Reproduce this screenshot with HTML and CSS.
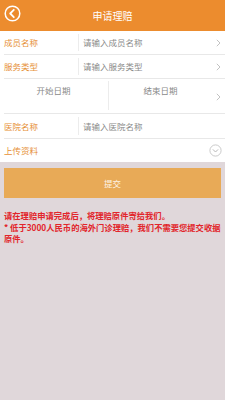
FILE: index.html
```html
<!DOCTYPE html>
<html lang="zh-CN">
<head>
    <meta charset="UTF-8">
    <meta name="viewport" content="width=device-width, initial-scale=1.0">
    <title>申请理赔</title>
    <link rel="stylesheet" href="styles.css">
</head>
<body>
    <header class="topbar">
        <svg class="back" width="17" height="17" viewBox="0 0 17 17">
            <circle cx="8.5" cy="8.5" r="7.3" fill="none" stroke="#fff" stroke-width="1.5"/>
            <path d="M9.8 4.8 L6.2 8.5 L9.8 12.2" fill="none" stroke="#fff" stroke-width="1.8" stroke-linecap="round" stroke-linejoin="round"/>
        </svg>
        <h1>申请理赔</h1>
    </header>

    <div class="form">
        <div class="row">
            <span class="label">成员名称</span>
            <span class="value">请输入成员名称</span>
            <svg class="chevron" width="5" height="8" viewBox="0 0 5 8"><path d="M0.8 0.8 L4 4 L0.8 7.2" fill="none" stroke="#bbb" stroke-width="0.9"/></svg>
        </div>
        <div class="row">
            <span class="label">服务类型</span>
            <span class="value">请输入服务类型</span>
            <svg class="chevron" width="5" height="8" viewBox="0 0 5 8"><path d="M0.8 0.8 L4 4 L0.8 7.2" fill="none" stroke="#bbb" stroke-width="0.9"/></svg>
        </div>
        <div class="row date-row">
            <div class="date-cell start">开始日期</div>
            <div class="date-cell end">结束日期</div>
            <svg class="chevron" width="5" height="8" viewBox="0 0 5 8"><path d="M0.8 0.8 L4 4 L0.8 7.2" fill="none" stroke="#bbb" stroke-width="0.9"/></svg>
        </div>
        <div class="row tall">
            <span class="label">医院名称</span>
            <span class="value">请输入医院名称</span>
        </div>
        <div class="row last">
            <span class="label">上传资料</span>
            <svg class="toggle" width="13" height="13" viewBox="0 0 13 13">
                <circle cx="6.5" cy="6.5" r="5.6" fill="none" stroke="#c4c4c4" stroke-width="0.9"/>
                <path d="M3.9 5.4 L6.5 8 L9.1 5.4" fill="none" stroke="#b8b8b8" stroke-width="1"/>
            </svg>
        </div>
    </div>

    <button class="submit">提交</button>

    <div class="notes">
        <p>请在理赔申请完成后，将理赔原件寄给我们。</p>
        <p>* 低于3000人民币的海外门诊理赔，我们不需要您提交收据原件。</p>
    </div>
</body>
</html>
```

FILE: styles.css
```css
body {
    margin: 0;
    font-family: "Noto Sans CJK SC", "Noto Sans", sans-serif;
    background-color: #e0d7da;
}

.topbar {
    position: relative;
    height: 31px;
    background-color: #ec8c2e;
    display: flex;
    align-items: center;
    justify-content: center;
}

.topbar h1 {
    margin: 0;
    font-size: 10px;
    font-weight: normal;
    color: #fff;
    line-height: 1;
}

.back {
    position: absolute;
    left: 4px;
    top: 5px;
}

.form {
    background-color: #fff;
}

.row {
    display: flex;
    align-items: center;
    height: 23px;
    margin-left: 4px;
    border-bottom: 1px solid #e8e8e8;
    font-size: 8.5px;
}

.row.tall {
    height: 24px;
}

.row.last {
    border-bottom: none;
}

.label {
    width: 74px;
    color: #e68f36;
    line-height: 1;
}

.value {
    flex: 1;
    align-self: stretch;
    display: flex;
    align-items: center;
    margin: 3px 0;
    padding-left: 4px;
    border-left: 1px solid #ececec;
    color: #8a8a8a;
    line-height: 1;
}

.chevron {
    margin: 0 4px 0 6px;
}

.date-row {
    height: 34px;
    align-items: stretch;
}

.date-cell {
    color: #8a8a8a;
    text-align: center;
    padding-top: 7px;
    line-height: 1;
}

.date-cell.start {
    width: 99px;
    padding-right: 5px;
    margin: 2px 0 3px;
    padding-top: 5px;
    border-right: 1px solid #ececec;
}

.date-cell.end {
    flex: 1;
    padding-left: 2px;
}

.date-row .chevron {
    align-self: center;
    margin-top: 2px;
}

.toggle {
    margin-left: auto;
    margin-right: 3px;
}

.submit {
    display: block;
    width: calc(100% - 8px);
    height: 30px;
    margin: 6px 4px 0;
    border: none;
    background-color: #e8aa57;
    color: #fdf3e6;
    font-family: inherit;
    font-size: 8.5px;
}

.notes {
    padding: 12px 4px 0;
    color: #e2252b;
    font-size: 8.3px;
    font-weight: bold;
    line-height: 11.5px;
}

.notes p {
    margin: 0;
}
```
